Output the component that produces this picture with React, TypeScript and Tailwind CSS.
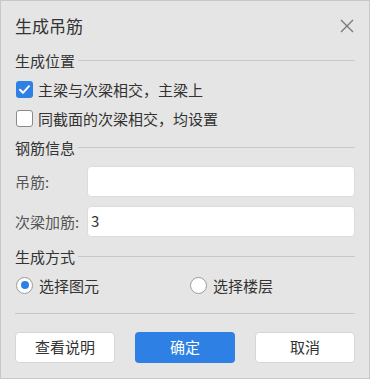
import React from "react";

const FONT = { fontFamily: '"Noto Sans CJK SC", "Noto Sans", sans-serif' };

function SectionTitle({ title }: { title: string }) {
  return (
    <div className="flex h-[20px] items-center gap-[3px]">
      <span className="text-[15px] leading-none text-[#333]">{title}</span>
      <div className="h-px flex-1 bg-[#c8c8c8]" />
    </div>
  );
}

function Check({ checked, label }: { checked?: boolean; label: string }) {
  return (
    <div className="flex h-[29px] items-center gap-[5px] pl-px">
      {checked ? (
        <span className="flex h-[17px] w-[17px] items-center justify-center rounded-[3px] bg-[#2f80e4]">
          <svg width="13" height="13" viewBox="0 0 13 13" fill="none">
            <path d="M2 6.8 L5 9.8 L11 3.2" stroke="#fff" strokeWidth="2" strokeLinecap="round" strokeLinejoin="round" />
          </svg>
        </span>
      ) : (
        <span className="h-[17px] w-[17px] rounded-[3px] border border-[#8a8a8a] bg-white" />
      )}
      <span className="text-[15px] leading-none text-[#333]">{label}</span>
    </div>
  );
}

function Radio({ checked, label }: { checked?: boolean; label: string }) {
  return (
    <div className="flex items-center gap-[6px]">
      <span className="flex h-[17px] w-[17px] items-center justify-center rounded-full border border-[#9a9a9a] bg-white">
        {checked && <span className="h-[8px] w-[8px] rounded-full bg-[#2f80e4]" />}
      </span>
      <span className="text-[15px] leading-none text-[#333]">{label}</span>
    </div>
  );
}

function Field({ label, value }: { label: string; value?: string }) {
  return (
    <div className="flex h-[31px] items-center">
      <span className="w-[72px] shrink-0 text-[15px] leading-none text-[#555]">{label}</span>
      <div className="flex h-full flex-1 items-center rounded-[4px] border border-[#dcdcdc] bg-white pl-[3px] text-[15px] text-[#333]">
        {value}
      </div>
    </div>
  );
}

function Button({ label, primary }: { label: string; primary?: boolean }) {
  return (
    <button
      className={`h-[31px] rounded-[4px] text-[15px] ${
        primary ? "bg-[#2f80e4] text-white" : "border border-[#d6d6d6] bg-white text-[#333]"
      }`}
    >
      {label}
    </button>
  );
}

export default function App() {
  return (
    <div style={FONT} className="h-[379px] w-[370px] border border-[#c8c8c8] bg-[#e5e5e5]">
      {/* Header */}
      <div className="flex h-[49px] items-center justify-between pl-[14px] pr-[15px]">
        <span className="text-[17px] leading-none text-[#333]">生成吊筋</span>
        <svg width="14" height="14" viewBox="0 0 14 14">
          <path d="M1 1 L13 13 M13 1 L1 13" stroke="#777" strokeWidth="1.3" />
        </svg>
      </div>

      <div className="px-[14px]">
        <SectionTitle title="生成位置" />
        <div className="mt-[5px]">
          <Check checked label="主梁与次梁相交，主梁上" />
          <Check label="同截面的次梁相交，均设置" />
        </div>

        <div className="mt-[4px]">
          <SectionTitle title="钢筋信息" />
        </div>
        <div className="mt-[9px] flex flex-col gap-[9px]">
          <Field label="吊筋:" />
          <Field label="次梁加筋:" value="3" />
        </div>

        <div className="mt-[9px]">
          <SectionTitle title="生成方式" />
        </div>
        <div className="mt-[9px] flex h-[20px] items-center pl-px">
          <div className="w-[174px]">
            <Radio checked label="选择图元" />
          </div>
          <Radio label="选择楼层" />
        </div>

        <div className="mt-[18px] h-px bg-[#c8c8c8]" />

        <div className="mt-[18px] grid grid-cols-3 gap-[20px]">
          <Button label="查看说明" />
          <Button primary label="确定" />
          <Button label="取消" />
        </div>
      </div>
    </div>
  );
}
